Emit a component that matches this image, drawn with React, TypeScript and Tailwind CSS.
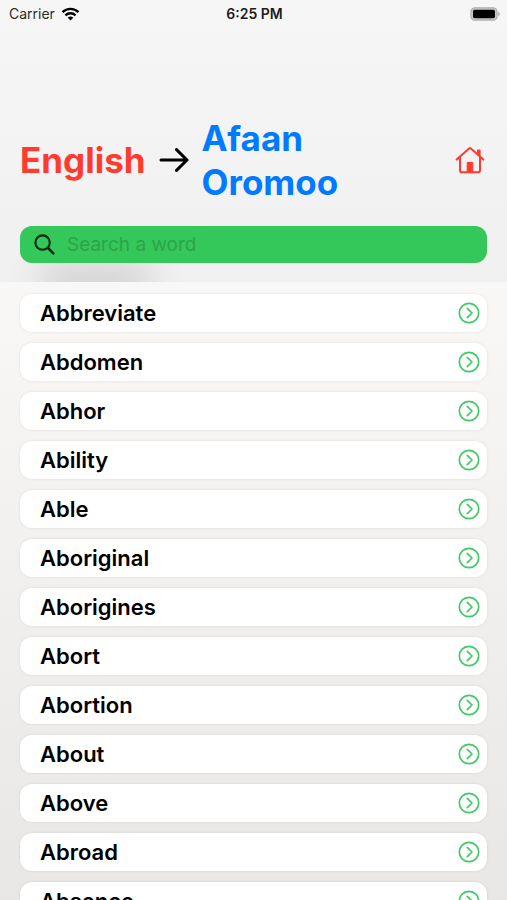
import { useState } from "react";

const WORDS = [
  "Abbreviate",
  "Abdomen",
  "Abhor",
  "Ability",
  "Able",
  "Aboriginal",
  "Aborigines",
  "Abort",
  "Abortion",
  "About",
  "Above",
  "Abroad",
  "Absence",
];

function StatusBar() {
  return (
    <div className="grid h-7 grid-cols-3 items-center pr-[7px] pl-[9px] text-sm">
      <div className="flex items-center gap-[6px] text-[#2b2b2b]">
        <span>Carrier</span>
        <svg width="19" height="14" viewBox="0 0 18 14" fill="none" stroke="#000" strokeWidth="2.4" aria-hidden="true">
          <path d="M1 5.1a11.6 11.6 0 0 1 16 0" />
          <path d="M3.9 8.3a7.4 7.4 0 0 1 10.2 0" />
          <path d="M9 13.6 6.2 10.8a4 4 0 0 1 5.6 0Z" fill="#000" stroke="none" />
        </svg>
      </div>
      <span className="text-center font-semibold text-[#1c1c1c]">6:25 PM</span>
      <svg className="justify-self-end" width="30" height="14" viewBox="0 0 30 14" aria-hidden="true">
        <rect x="1" y="0.8" width="26" height="12.4" rx="3.8" fill="#c8c8c8" stroke="#b0b0b0" strokeWidth="1.3" />
        <rect x="3" y="2.8" width="22" height="8.4" rx="1.6" fill="#000" />
        <path d="M28.2 4.8v4.4c2-.9 2-3.5 0-4.4Z" fill="#a9a9a9" />
      </svg>
    </div>
  );
}

function ArrowIcon() {
  return (
    <svg className="shrink-0" width="30" height="26" viewBox="0 0 30 26" fill="none" stroke="#000" strokeWidth="3" strokeLinecap="round" strokeLinejoin="round" aria-hidden="true">
      <path d="M2 13h26M17.5 2.6 28 13 17.5 23.4" />
    </svg>
  );
}

function HomeIcon() {
  return (
    <svg width="30" height="28" viewBox="0 0 30 28" fill="none" stroke="#ff3b30" strokeWidth="2" strokeLinecap="round" strokeLinejoin="round" aria-hidden="true">
      <path d="M1.6 13.6 14.2 2.4a1.2 1.2 0 0 1 1.6 0l12.6 11.2" />
      <path d="M5 11.4v13a1.8 1.8 0 0 0 1.8 1.8h16.4a1.8 1.8 0 0 0 1.8-1.8v-13" />
      <path d="M22.6 7.6V4.2h2.4v5.6Z" fill="#ff3b30" strokeWidth="1.2" />
      <path d="M12.2 26v-9.5h5.6V26Z" fill="#ff3b30" strokeWidth="1" />
    </svg>
  );
}

function ChevronCircle() {
  return (
    <svg className="shrink-0" width="22" height="22" viewBox="0 0 22 22" fill="none" stroke="#41c965" strokeWidth="1.7" strokeLinecap="round" strokeLinejoin="round" aria-hidden="true">
      <circle cx="11" cy="11" r="9.7" />
      <path d="M9.3 6.4 14 11l-4.7 4.6" />
    </svg>
  );
}

export default function App() {
  const [query, setQuery] = useState("");
  const shown = WORDS.filter((w) => w.toLowerCase().startsWith(query.toLowerCase()));

  return (
    <div className="flex h-screen flex-col overflow-hidden bg-linear-to-b from-[#f9f8f7] from-30% to-[#e8e7e5] font-[Inter,sans-serif] text-black">
      <header className="relative shrink-0 overflow-hidden bg-linear-to-b from-[#f6f6f6] to-[#f0f0f0] pb-[19px]">
        <div className="absolute -bottom-3 left-10 h-7 w-28 rounded-full bg-black/15 blur-lg" />
        <div className="relative">
          <StatusBar />
          <div className="mt-[88px] flex items-center px-5 text-[35px] leading-11 font-bold">
            <h1 className="flex flex-1 items-center gap-[13px]">
              <span className="text-[#ff3b30]">English</span>
              <ArrowIcon />
              <span className="w-40 text-[#007aff]">Afaan Oromoo</span>
            </h1>
            <button type="button" aria-label="Home" className="mr-[2px]">
              <HomeIcon />
            </button>
          </div>
          <label className="mx-5 mt-[22px] flex h-[37px] items-center gap-3 rounded-xl bg-[#34c759] px-[14px]">
            <svg className="shrink-0" width="21" height="21" viewBox="0 0 21 21" fill="none" stroke="#06270f" strokeWidth="2.1" strokeLinecap="round" aria-hidden="true">
              <circle cx="8.6" cy="8.6" r="7.2" />
              <path d="m14 14 5.3 5.3" strokeWidth="2.6" />
            </svg>
            <input
              type="text"
              aria-label="Search a word"
              placeholder="Search a word"
              value={query}
              onChange={(e) => setQuery(e.target.value)}
              className="h-full min-w-0 flex-1 bg-transparent text-[19px] outline-none placeholder:text-[#2fa34c]"
            />
          </label>
        </div>
      </header>
      <main className="min-h-0 flex-1 overflow-hidden px-5 pt-3">
        <ul className="flex flex-col gap-[11px]">
          {shown.map((word) => (
            <li key={word}>
              <button
                type="button"
                className="flex h-[38px] w-full items-center justify-between rounded-xl bg-white pr-[7px] pl-5 text-left text-[22px] font-semibold shadow-[0_0_3px_rgba(0,0,0,0.09)]"
              >
                <span>{word}</span>
                <ChevronCircle />
              </button>
            </li>
          ))}
        </ul>
      </main>
    </div>
  );
}
